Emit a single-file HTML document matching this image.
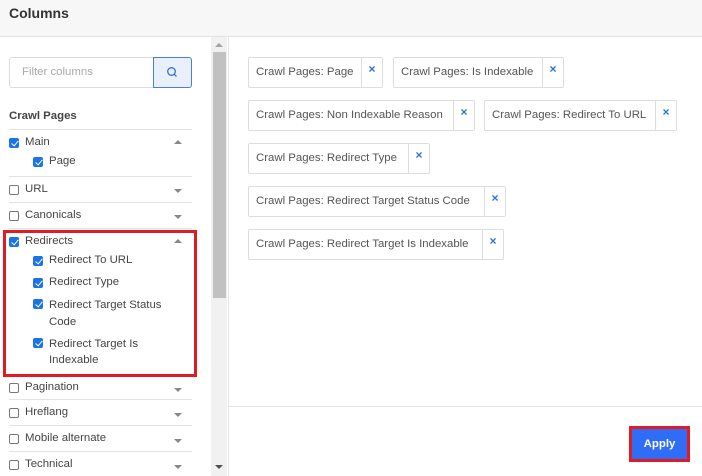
<!DOCTYPE html>
<html><head><style>
*{box-sizing:border-box;margin:0;padding:0}
body{width:702px;height:476px;overflow:hidden;background:#fff;font-family:"Liberation Sans",sans-serif;color:#444;position:relative;font-size:11.4px}
.abs{position:absolute}
.hdr{left:0;top:0;width:702px;height:37px;background:#f7f7f7;border-bottom:1px solid #e2e2e2}
.hdr b{position:absolute;left:9px;top:5px;font-size:14px;color:#333}
.cb{position:absolute;width:10px;height:10px;border:1px solid #777;border-radius:2px;background:#fff}
.cb.on{background:#1a73e8;border-color:#1a73e8}
.cb.on::after{content:"";position:absolute;left:2.5px;top:0px;width:3px;height:6px;border:solid #fff;border-width:0 1.5px 1.5px 0;transform:rotate(40deg)}
.lbl{position:absolute;font-size:11.4px;color:#444}
.ln{position:absolute;left:9px;width:183px;height:1px;background:#e3e3e3}
.up,.dn{position:absolute;left:174px;width:0;height:0;border-left:4px solid transparent;border-right:4px solid transparent}
.up{border-bottom:4px solid #888}.dn{border-top:4px solid #888}
.chip{position:absolute;height:31px;border:1px solid #ddd;border-radius:2px;font-size:11.4px;color:#555;line-height:29px;padding-left:7px}
.chip i{position:absolute;top:0;right:0;height:29px;width:21px;border-left:1px solid #ddd;font-style:normal;color:#2a6fdb;font-weight:bold;text-align:center;line-height:22px;font-size:12px}
</style></head><body>
<div class="abs hdr"><b>Columns</b></div>
<div class="abs" style="left:9px;top:57px;width:145px;height:31px;border:1px solid #ddd;border-radius:3px 0 0 3px;padding:8px 12px;color:#aaa;font-size:11.4px">Filter columns</div>
<div class="abs" style="left:153px;top:57px;width:39px;height:31px;border:1px solid #4a7fd8;background:#e9f0fc;border-radius:0 3px 3px 0">
<svg width="39" height="31" viewBox="0 0 39 31" style="position:absolute;left:-1px;top:-1px"><circle cx="18.5" cy="14.5" r="3.8" fill="none" stroke="#3a6fd0" stroke-width="1.3"/><line x1="21.3" y1="17.3" x2="23.5" y2="19.5" stroke="#3a6fd0" stroke-width="1.3"/></svg></div>
<div class="abs" style="left:9px;top:110px;font-weight:bold;font-size:11.4px;color:#444">Crawl Pages</div>
<div class="ln" style="top:129px"></div>
<div class="cb on" style="left:9px;top:138px"></div><div class="lbl" style="left:25px;top:136px">Main</div><div class="up" style="top:140px"></div>
<div class="cb on" style="left:33px;top:157px"></div><div class="lbl" style="left:49px;top:155px">Page</div>
<div class="ln" style="top:176px"></div>
<div class="cb" style="left:9px;top:185px"></div><div class="lbl" style="left:25px;top:183px">URL</div><div class="dn" style="top:189px"></div>
<div class="ln" style="top:202px"></div>
<div class="cb" style="left:9px;top:211px"></div><div class="lbl" style="left:25px;top:209px">Canonicals</div><div class="dn" style="top:215px"></div>
<div class="ln" style="top:228px"></div>
<div class="abs" style="left:3px;top:230px;width:194px;height:147px;border:3px solid #e01b24"></div>
<div class="cb on" style="left:9px;top:237px"></div><div class="lbl" style="left:25px;top:235px">Redirects</div><div class="up" style="top:239px"></div>
<div class="cb on" style="left:33px;top:256px"></div><div class="lbl" style="left:49px;top:254px">Redirect To URL</div>
<div class="cb on" style="left:33px;top:278px"></div><div class="lbl" style="left:49px;top:276px">Redirect Type</div>
<div class="cb on" style="left:33px;top:299px"></div><div class="lbl" style="left:49px;top:297px;line-height:17px">Redirect Target Status<br>Code</div>
<div class="cb on" style="left:33px;top:338px"></div><div class="lbl" style="left:49px;top:336px;line-height:16px">Redirect Target Is<br>Indexable</div>
<div class="cb" style="left:9px;top:383px"></div><div class="lbl" style="left:25px;top:381px">Pagination</div><div class="dn" style="top:388px"></div>
<div class="ln" style="top:399px"></div>
<div class="cb" style="left:9px;top:408px"></div><div class="lbl" style="left:25px;top:406px">Hreflang</div><div class="dn" style="top:413px"></div>
<div class="ln" style="top:425px"></div>
<div class="cb" style="left:9px;top:434px"></div><div class="lbl" style="left:25px;top:432px">Mobile alternate</div><div class="dn" style="top:439px"></div>
<div class="ln" style="top:451px"></div>
<div class="cb" style="left:9px;top:460px"></div><div class="lbl" style="left:25px;top:458px">Technical</div><div class="dn" style="top:465px"></div>
<div class="abs" style="left:211px;top:37px;width:16px;height:439px;background:#f1f1f1"></div>
<div class="abs" style="left:213px;top:52px;width:13px;height:246px;background:#c1c1c1"></div>
<div class="abs" style="left:215px;top:43px;border-left:4px solid transparent;border-right:4px solid transparent;border-bottom:4px solid #a3a3a3"></div>
<div class="abs" style="left:215px;top:465px;border-left:4px solid transparent;border-right:4px solid transparent;border-top:4px solid #505050"></div>
<div class="abs" style="left:228px;top:37px;width:1px;height:439px;background:#e5e5e5"></div>
<div class="abs" style="left:229px;top:406px;width:473px;height:1px;background:#e5e5e5"></div>
<div class="chip" style="left:248px;top:57px;width:135px">Crawl Pages: Page<i>×</i></div>
<div class="chip" style="left:393px;top:57px;width:171px">Crawl Pages: Is Indexable<i>×</i></div>
<div class="chip" style="left:248px;top:100px;width:227px">Crawl Pages: Non Indexable Reason<i>×</i></div>
<div class="chip" style="left:484px;top:100px;width:193px">Crawl Pages: Redirect To URL<i>×</i></div>
<div class="chip" style="left:248px;top:143px;width:182px">Crawl Pages: Redirect Type<i>×</i></div>
<div class="chip" style="left:248px;top:186px;width:258px">Crawl Pages: Redirect Target Status Code<i>×</i></div>
<div class="chip" style="left:248px;top:229px;width:256px">Crawl Pages: Redirect Target Is Indexable<i>×</i></div>
<div class="abs" style="left:629px;top:426px;width:61px;height:36px;border:3px solid #e01b24;background:#2f6df6;color:#fff;font-weight:bold;font-size:11.4px;text-align:center;line-height:30px">Apply</div>
</body></html>
